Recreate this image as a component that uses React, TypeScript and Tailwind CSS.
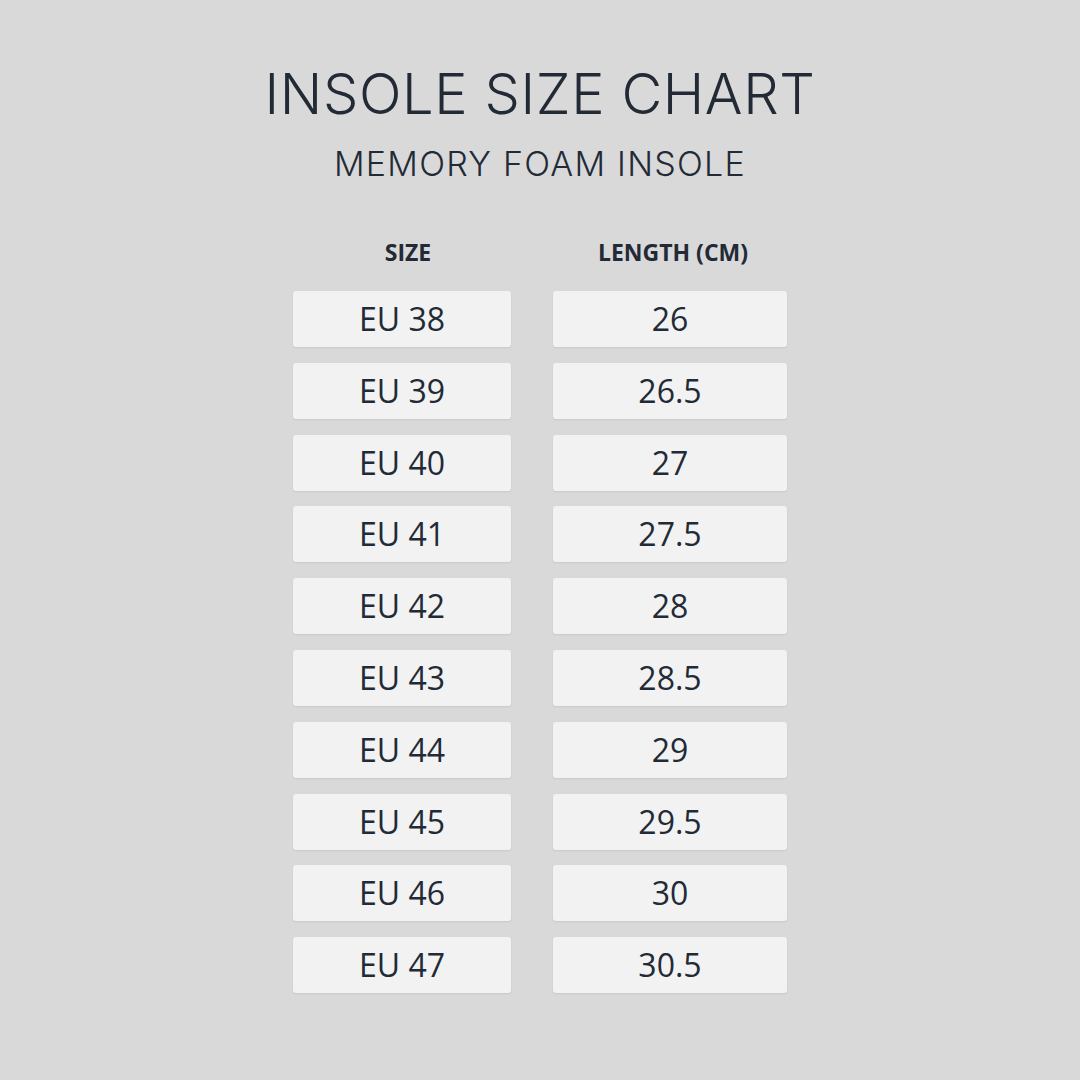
const rows = [
  ['EU 38', '26'],
  ['EU 39', '26.5'],
  ['EU 40', '27'],
  ['EU 41', '27.5'],
  ['EU 42', '28'],
  ['EU 43', '28.5'],
  ['EU 44', '29'],
  ['EU 45', '29.5'],
  ['EU 46', '30'],
  ['EU 47', '30.5'],
];

export default function App() {
  return (
    <div className="w-[1080px] h-[1080px] bg-[#d9d9d9] flex flex-col items-center text-[#222a36] font-['Open_Sans',sans-serif]">
      <h1 className="mt-[66px] text-[56px] leading-[56px] font-light tracking-[0.6px] font-['Inter',sans-serif]">
        INSOLE SIZE CHART
      </h1>
      <h2 className="mt-[25px] text-[34px] leading-[34px] font-light tracking-[1.25px] font-['Inter',sans-serif]">
        MEMORY FOAM INSOLE
      </h2>

      <div className="mt-[57px] flex gap-[42px]">
        <div className="w-[218px] text-center text-[23px] leading-[28px] font-bold pl-[12px]">SIZE</div>
        <div className="w-[234px] text-center text-[23px] leading-[28px] font-bold pl-[6px]">LENGTH (CM)</div>
      </div>

      <div className="mt-[25px] flex flex-col gap-[15.8px]">
        {rows.map(([size, len]) => (
          <div key={size} className="flex gap-[42px]">
            <div className="w-[218px] h-[56px] rounded-[3px] bg-[#f2f2f2] shadow-[0_1px_2px_rgba(0,0,0,0.08)] flex items-center justify-center text-[32px]">
              {size}
            </div>
            <div className="w-[234px] h-[56px] rounded-[3px] bg-[#f2f2f2] shadow-[0_1px_2px_rgba(0,0,0,0.08)] flex items-center justify-center text-[32px]">
              {len}
            </div>
          </div>
        ))}
      </div>
    </div>
  );
}
